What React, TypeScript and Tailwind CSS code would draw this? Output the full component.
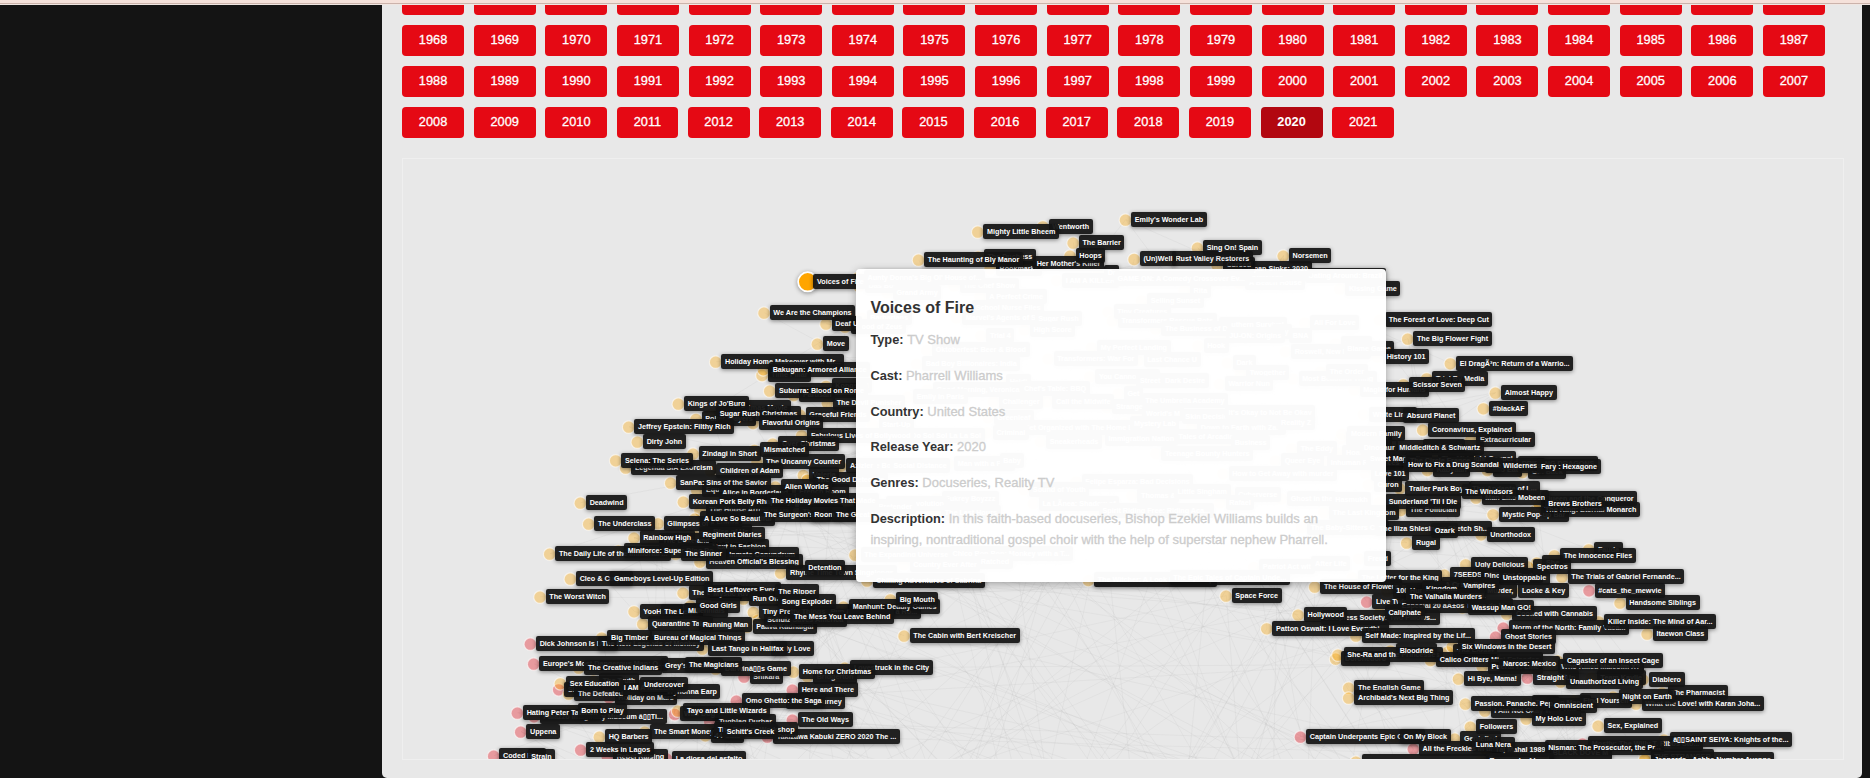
const YEARS = Array.from({ length: 74 }, (_, i) => 1948 + i);
const ACTIVE_YEAR = 2020;

type Kind = "show" | "movie";
interface TitleNode {
  x: number;
  y: number;
  kind: Kind;
  title: string;
}

/* Each cluster lists "x y title" in its own local units; "x yr title" marks a movie. */
interface Cluster {
  origin: [number, number];
  unit: [number, number];
  rows: string;
}

const CLUSTERS: Cluster[] = [
  {
    origin: [437, 101],
    unit: [2.8, 3],
    rows: `80 78 Das Boot
345 77 The Chef Show
77 52 Aunty Donna's Big Ol' House of...
632 61 I AM A KILLER
750 38 Dr
777 55 GAME ON: A Comedy Crossover Ev...
1145 69 A Beach House
1152 43 Stateless
1312 47 Dating Around: Brazil
1425 86 Kissing Game
158 98 Grand Army
418 109 A Perfect Crime
990 91 Rita
870 121 Selling Sunset
380 142 School Nurse Files
85 172 Barbarians
352 173 Marvel's Agents of S
555 175 Sugar Rush
776 155 Tiny Creatures
788 182 Transformers Rescue Bots
1070 193 Southern Survival
1327 187 All For Love
542 209 High Score
420 226 Trial 4
910 206 The Business of D
1220 215 Say
1090 227 JU-ON: Origins
1268 227 BNA
730 262 My Perfect Landing
1028 256 Hook
1413 250 Babies
1273 274 Roswell, New Mexico
268 270 Oktoberfest: Beer & Blood
860 300 Last Chance U
608 296 Transformers: War For
240 311 Bad Boy Billionaires: India
1110 308 Dark
1147 338 Twogether
1294 356 Most Beautiful Thing
1371 334 The Order
725 349 You Cannot Hide
840 362 Street
910 362 Dark Desire
1088 371 Warrior Nun
475 364 Heidi
515 386 Chef's Table: BBQ
270 388 Good Morning, Veronica
215 410 Emily in Paris
805 400 Get
605 424 Call the Midwife
455 424 Challenger
855 422 The Umbrella Academy
773 441 Strange
857 461 World's M
967 470 Skin Decision
1088 457 It's Okay to Not Be Okay
440 472 Greenleaf
118 494 Start-Up
515 502 Get Organized with The Home E
823 490 Mystery Lab
1010 502 Down to Earth with Za...
1235 488 Reality Z
167 526 Do Do Sol Sol La La Sol
438 517 Criminal
587 544 Sneakerheads
948 530 Tales of Arcadia
752 535 Immigration Nation
1105 547 Business
1427 535 Dead to Me
910 580 Teenage Bounty Hunters
1290 565 The Eddy
1417 577 Hoarders
75 618 The Bold
150 616 Social Distance
330 610 Man with a Plan
457 601 Baby
1245 601 Queer Eye
1374 607 Inhuman Resources
1098 640 How to Get Away with murder
1497 640 Love 101
687 664 Felipe Esparza: Bad Decisions
540 688 Sound of Youth
1505 673 Curon
843 706 Thomas &
945 694 Little Singham
1115 703 Cyberverse
295 715 Fukrey Boyzzz
140 730 La RÃ©volution
50 739 Great Pretender
567 730 La LÃnea: Shadow of
1090 727 Rafael
1262 715 Ghost in the
1387 718 Hasmukh
293 757 The Last Hours
735 751 Spirit Riding Free: Riding Aca...
1380 757 The Last Kingdom
1318 802 The Baby-Sitters Club
68 884 The Expanding Universe
315 881 Chico Bon Bon: Monkey with a T...
205 913 Country Ever After
394 904 Ratched
1184 921 Patriot Act wit
1330 910 After Life
1478 895 Freud`,
  },
  {
    origin: [457, 41],
    unit: [2.904, 3],
    rows: `558 79 Wentworth
369 95 Mighty Little Bheem
798 59 Emily's Wonder Lab
646 128 The Barrier
405 205 Bookmarks
370 170 The Duchess
513 191 Her Mother's Killer
637 167 Hoops
197 179 The Haunting of Bly Manor
1120 205 Japan Sinks: 2020
1064 195 Cursed
916 177 Rust Valley Restorers
823 177 (Un)Well
1007 143 Sing On! Spain
1256 167 Norsemen`,
  },
  {
    origin: [77, 41],
    unit: [3, 3],
    rows: `1123 380 Blood of Zeus
1066 371 Deaf U
880 338 We Are the Champions
1040 431 Move
735 485 Holiday Home Makeover with Mr...
874 525 Time Pillar
878 508 Bakugan: Armored Alliance
969 585 Partisan
1066 558 Kongsuni
897 572 Suburra: Blood on Rome`,
  },
  {
    origin: [77, 241],
    unit: [3, 3],
    rows: `1070 8 The Devil Punisher
750 22 Christmas Movie
676 57 Poker Players
623 11 Kings of Jo'Burg
988 44 Graceful Friends
719 41 Sugar Rush Christmas
847 69 Flavorful Origins
474 80 Jeffrey Epstein: Filthy Rich
500 125 Dirty John
993 106 Fabulous Lives of Bollywood
906 131 Over Christmas
851 150 Mismatched
667 161 Zindagi in Short
465 203 Legenda SIA Exorcism
435 181 Selena: The Series
859 185 The Uncanny Counter
1110 198 Azizler
678 270 Equinox
600 248 SanPa: Sins of the Savior
720 212 Children of Adam
998 225 Valeria
1010 239 The Good Detective
958 275 French Room
727 278 Alice in Borderland
914 260 Alien Worlds
968 335 The Bhaag
688 330 The House Arrest of Us
638 305 Korean Pork Belly Rhapsody
873 302 The Holiday Movies That Made
329 308 Deadwind
562 370 Glimpses of a Future
354 371 The Underclass
672 356 A Love So Beautiful
852 345 The Surgeon's Cut
1003 345 Room 2806
1068 345 The Great Heist
700 395 Rise of Us
548 422 The Duke and the Beauty
490 413 Rainbow High
697 440 Next in Fashion
668 404 Regiment Diaries
748 464 Inmate Conundrum
688 485 Heaven Official's Blessing
237 461 The Daily Life of the Immortal ...
443 452 Miniforce: Super Dino Po
615 461 The Sinner
930 518 Rhyme Time Town Singalongs
985 503 Detention
299 536 Cleo & Cuquin
402 536 Gameboys Level-Up Edition`,
  },
  {
    origin: [77, 429],
    unit: [3, 3],
    rows: `208 26 The Worst Witch
637 14 The Liberator
700 18 Mystic River
683 5 Best Leftovers Ever!
818 32 Run On
895 11 The Ripper
490 70 YooHoo to
553 70 The Letter
624 68 Millennials
659 53 Good Girls
1052 70 Pup Academy
829 116 Paava Kadhaigal
862 96 Schulz Saves America
848 72 Tiny Pretty Things
905 41 Song Exploder
1115 70 The Story of a Ro...
1118 56 Manhunt: Deadly Games
942 86 The Mess You Leave Behind
1259 34 Big Mouth
516 107 Quarantine Tales
668 110 Running Man
179 167r Dick Johnson Is Dead
365 167 The New Legends of Monkey
393 149 Big Timber
522 149 Bureau of Magical Things
1300 143 The Cabin with Bert Kreischer
884 182 Truly Love
695 182 Last Tango in Halifax
189 227r Europe's Most Dangerous Man: O...
555 232 Grey's Anatomy
324 239 The Creative Indians
820 266r Shikara
735 242 Darwinâ▯▯s Game
627 229 The Magicians
1122 239 Lovestruck in the City
1010 265 Bridgerton
968 251 Home for Christmas
264 304r Sir
368 278 The Truth
415 328r Holiday on Mars
560 310 Wynonna Earp
294 317 The Defeated
431 298 I AM A KILLER
492 290 Undercover
269 286 Sex Education
965 305r Here and There
930 341 A New Journey
797 338r Omo Ghetto: the Saga
190 385r Palazzo Imaginary Museum â▯▯Ti...
140 374r Hating Peter Tatchell
304 368 Born to Play
612 378r Wild Dog
717 400r Tughlaq Durbar
621 368 Tayo and Little Wizards
965 395r The Old Ways
150 431r Uppena
386 446 HQ Barbers
522 431 The Smart Money Woman
704 442 44 Cats
890 446r Takizawa Kabuki ZERO 2020 The ...
714 425 The Pottery Workshop
740 431 Schitt's Creek
69 503r Coded Bias
154 507 Strain
410 505r Rebel Raising
330 485r 2 Weeks in Lagos
587 511r La diosa del asfalto`,
  },
  {
    origin: [447, 411],
    unit: [3, 3],
    rows: `79 32 Chilling Adventures of Sabrina
743 30 The Witcher: A Look Inside the Ep
970 24 The Epic Tales of Captain Unde...
1156 77 Space Force`,
  },
  {
    origin: [957, 111],
    unit: [3, 3],
    rows: `86 149 The Forest of Love: Deep Cut
171 206 The Big Flower Fight
-38 236 Blame Game
80 260 History 101
299 280 El DragÃ³n: Return of a Warrio...
228 325 Trial By Media
10 359 Magic for Humans
158 343 Scissor Seven
434 368 Almost Happy
398 415 #blackAF
38 433 White Lines
140 437 Absurd Planet
-27 491 Modern Family
360 509 Extracurricular
216 479 Coronavirus, Explained
200 530 Feel Good
11 533 Dinosaur
118 533 Middleditch & Schwartz`,
  },
  {
    origin: [957, 291],
    unit: [3, 3],
    rows: `230 60 Kabyaan
410 60 To Eat
515 66 Get Back
30 27 Sweet Magnolias
245 25 The Midnight Gospel
485 40 DRIFTING DRAGONS
385 47 The Wilderness
150 32 The Circle France
144 43 How to Fix a Drug Scandal
543 49 Fary : Hexagone
337 115 The Andante of L...
147 115 Trailer Park Boys
555 146 Queen and the Conqueror
376 143 Man Like Mobeen
316 125 The Windsors
427 193 Mystic Pop-up Bar
555 180 The King: Eternal Monarch
565 160 Brews Brothers
150 180 The Politician
86 155 Sunderland 'Til I Die
57 236 The Iliza Shlesinger Sketch Sh...
224 241 Ozark
391 253 Unorthodox
168 278 Rugal
714 298 Fauda
611 316 The Innocence Files
345 343 Ugly Delicious
558 338 She
281 374 7SEEDS
5 382 The Letter for the King
373 377 Dino Girl Gauko
428 382 Unstoppable
531 349 Spectros
634 380 The Trials of Gabriel Fernande...
-108 410 The House of Flowers
255 403 A Crazy Day
109 423 100 Humans
382 423 Murder,
150 421 Hurricane
198 415 Kingdom
310 407 Vampires
486 421 Locke & Key
715 421r #cats_the_mewvie
48 455r Live Twice
125 466 Especial 20 aÃ±os Tierra de N...
150 439 The Valhalla Murders
468 491 Cooked with Cannabis
335 472 Wassup Man GO!
808 458 Handsome Siblings`,
  },
  {
    origin: [857, 441],
    unit: [2.6133, 3],
    rows: `168 53 Sleepless Society: Two Pillows...
124 44 Hollywood
336 38 Caliphate
42 85 Patton Oswalt: I Love Everythi...
275 107 Self Made: Inspired by the Lif...
660 83r Norm of the North: Family Vaca...
640 110r Ghost Stories
909 64 Killer Inside: The Mind of Aar...
1036 101 Itaewon Class
222 176 Dorohedoro
228 164 She-Ra and the Princesses
365 152 Bloodride
515 155 The Forest
470 180 Calico Critters Mini Episodes
527 139 Six Windows in the Desert
605 199 Puerta 7: Line
635 191 Narcos: Mexico
787 200 Who Killed Malcolm X?
802 182 Cagaster of an Insect Cage
543 236 Hi Bye, Mama!
723 233r Straight Up
890 233 Team Kaylie
810 245 Unauthorized Living
1025 238 Diablero
256 263 The English Game
256 293 Archibald's Next Big Thing
1075 278 The Pharmacist
1007 311 What the Love! with Karan Joha...
612 332 I Am Not Okay With This
720 308 Taco, no Mamo
561 311 Passion. Panache. Pep.
845 302 Find Yourself
768 317 Omniscient
947 290 Night on Earth
720 356 My Holo Love
574 380 Followers
908 377 Sex, Explained
130 410r Captain Underpants Epic Choice
375 410 On My Block
533 416 Gentefied
425 446r All the Freckles in the
615 450 Taj Mahal 1989
564 434 Luna Nera
765 458 BLACK DOVE M
867 431r Mostly: The Willy T. Ribbs Sto...
753 443 Nisman: The Prosecutor, the Pr...
1080 419 â▯▯SAINT SEIYA: Knights of the...
1030 469 THE STRANGER
1030 478 Jeopards - Ashbe Number Avenge
275 485 The Ghost Bride of the Tower Road
600 483 Ragnarok of Love`,
  },
];

const NODES: TitleNode[] = CLUSTERS.flatMap(({ origin, unit, rows }) =>
  rows.split("\n").map((row) => {
    const [, x, y, movie, title] = row.match(/^(-?\d+) (\d+)(r?) (.*)$/)!;
    return {
      x: origin[0] + Number(x) / unit[0],
      y: origin[1] + Number(y) / unit[1],
      kind: movie ? "movie" : "show",
      title,
    };
  }),
);

const SELECTED = { x: 414, y: 122.4, title: "Voices of Fire" };

function makeRandom(seed: number) {
  let s = seed;
  return () => {
    s = (s * 16807) % 2147483647;
    return s / 2147483647;
  };
}

const random = makeRandom(4127);
const LINKS = Array.from({ length: 300 }, () => {
  const a = NODES[Math.floor(random() * NODES.length)];
  const b = NODES[Math.floor(random() * NODES.length)];
  const down = random() < 0.55;
  return {
    x1: a.x - 9,
    y1: a.y,
    x2: down ? 120 + random() * 1200 : b.x - 9,
    y2: down ? 640 + random() * 450 : b.y,
  };
});

const DETAILS = [
  { label: "Type:", value: "TV Show" },
  { label: "Cast:", value: "Pharrell Williams" },
  { label: "Country:", value: "United States" },
  { label: "Release Year:", value: "2020" },
  { label: "Genres:", value: "Docuseries, Reality TV" },
  {
    label: "Description:",
    value:
      "In this faith-based docuseries, Bishop Ezekiel Williams builds an inspiring, nontraditional gospel choir with the help of superstar nephew Pharrell.",
  },
];

function NodeLabel({ x, y, title }: { x: number; y: number; title: string }) {
  return (
    <span
      className="absolute flex h-[14.8px] items-center whitespace-nowrap rounded-[2px] bg-[rgba(20,20,20,0.94)] px-[3.6px] text-[7.2px] font-bold leading-none text-white shadow-[0_1px_4px_rgba(0,0,0,0.45)]"
      style={{ left: x - 3.6, top: y - 7.6 }}
    >
      {title}
    </span>
  );
}

function YearButtons() {
  return (
    <div className="-mt-[21px] flex flex-wrap gap-x-[9.6px] gap-y-[10px]">
      {YEARS.map((year) => (
        <button
          key={year}
          className={
            year === ACTIVE_YEAR
              ? "h-[31px] rounded-[4px] bg-[#b20710] px-[16.79px] text-[12.8px] font-bold leading-none text-white"
              : "h-[31px] rounded-[4px] bg-[#e50914] px-[16.79px] text-[12.8px] leading-none text-white [-webkit-text-stroke:0.3px_#fff]"
          }
        >
          {year}
        </button>
      ))}
    </div>
  );
}

function DetailCard() {
  return (
    <div className="absolute left-[453px] top-[110px] h-[313px] w-[530px] rounded-[4px] bg-[rgba(255,255,255,0.98)] pl-[14.4px] pr-[30px] pt-[29px] shadow-[0_2px_8px_rgba(0,0,0,0.3)]">
      <h3 className="text-[16px] font-bold leading-[20px] text-[#333]">Voices of Fire</h3>
      <dl className="mt-[11.4px] flex flex-col gap-[14.7px] text-[12.8px] leading-[21px]">
        {DETAILS.map(({ label, value }) => (
          <div key={label}>
            <dt className="inline font-bold text-[#333]">{label}</dt>{" "}
            <dd className="inline text-[13px] text-[#ccc] [-webkit-text-stroke:0.3px_#ccc]">{value}</dd>
          </div>
        ))}
      </dl>
    </div>
  );
}

function TitleGraph() {
  return (
    <div className="relative mt-[20px] h-[602px] w-[1442px] overflow-hidden border border-[#efefef]">
      <svg className="block h-[600px] w-[1440px]" viewBox="0 0 1440 600">
        <g stroke="#999" strokeOpacity="0.13" strokeWidth="0.7">
          {LINKS.map((l, i) => (
            <line key={i} x1={l.x1} y1={l.y1} x2={l.x2} y2={l.y2} />
          ))}
        </g>
        <g stroke="#fff" strokeOpacity="0.6" strokeWidth="1.2">
          {NODES.map((n, i) => (
            <circle
              key={i}
              cx={n.x - 9.3}
              cy={n.y + 0.5}
              r={6.3}
              fill={n.kind === "movie" ? "#e50914" : "#ffa500"}
              fillOpacity="0.35"
            />
          ))}
        </g>
        <circle
          cx={SELECTED.x - 9.3}
          cy={SELECTED.y + 0.4}
          r={9.6}
          fill="#ffa500"
          stroke="#fff"
          strokeWidth="1.8"
          className="drop-shadow-[0_1px_2px_rgba(0,0,0,0.4)]"
        />
      </svg>
      {NODES.map((n, i) => (
        <NodeLabel key={i} x={n.x} y={n.y} title={n.title} />
      ))}
      <NodeLabel {...SELECTED} />
      <DetailCard />
    </div>
  );
}

export default function App() {
  return (
    <div className="flex h-[778px] w-[1870px] flex-col overflow-hidden bg-[#141414] font-['Liberation_Sans',Arial,sans-serif]">
      <div className="h-[5px] shrink-0 border-b border-[#f0e6e2] bg-[#f5e1da]">
        <div className="mt-[3px] h-px bg-[#cbb3ab]" />
      </div>
      <div className="flex min-h-0 flex-1">
        <aside className="w-[382px] shrink-0" />
        <main className="w-[1480px] shrink-0 overflow-hidden rounded-b-[5px] bg-[#e8e8e8] pl-[20px] pr-[18px]">
          <YearButtons />
          <TitleGraph />
        </main>
      </div>
    </div>
  );
}
